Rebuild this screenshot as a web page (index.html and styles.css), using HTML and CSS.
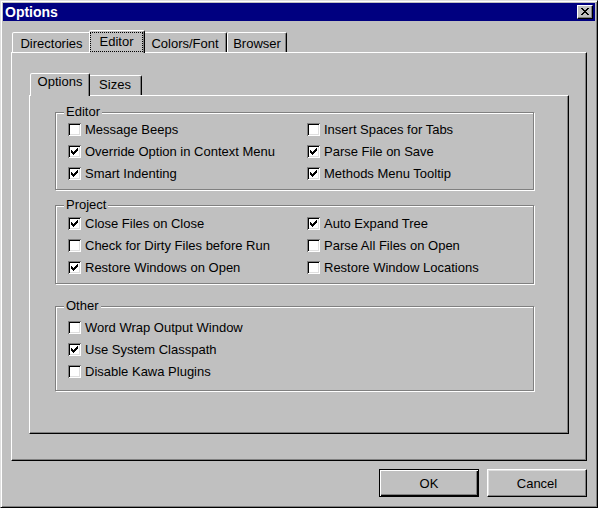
FILE: index.html
```html
<!DOCTYPE html>
<html>
<head>
<meta charset="utf-8">
<title>Options</title>
<link rel="stylesheet" href="styles.css">
</head>
<body>
<div class="window">
  <div class="titlebar">
    <span class="title">Options</span>
    <button class="close" aria-label="Close">
      <svg width="8" height="7" viewBox="0 0 8 7" shape-rendering="crispEdges"><path d="M0 0h2v1h-2zM6 0h2v1h-2zM1 1h2v1h-2zM5 1h2v1h-2zM2 2h4v1h-4zM3 3h2v1h-2zM2 4h4v1h-4zM1 5h2v1h-2zM5 5h2v1h-2zM0 6h2v1h-2zM6 6h2v1h-2z" fill="#000"/></svg>
    </button>
  </div>
  <div class="main">
    <div class="tabs outer-tabs">
      <div class="tab t-dir">Directories</div>
      <div class="tab active t-editor"><span class="focus">Editor</span></div>
      <div class="tab t-colors">Colors/Font</div>
      <div class="tab t-browser">Browser</div>
    </div>
    <div class="panel outer-panel">
      <div class="tabs inner-tabs">
        <div class="tab active t-options">Options</div>
        <div class="tab t-sizes">Sizes</div>
      </div>
      <div class="panel inner-panel">
        <div class="group g-editor">
          <span class="legend">Editor</span>
          <div class="rows">
            <label class="cb"><span class="box"></span>Message Beeps</label>
            <label class="cb"><span class="box"></span>Insert Spaces for Tabs</label>
            <label class="cb"><span class="box checked"><svg width="13" height="13" viewBox="0 0 13 13" shape-rendering="crispEdges"><path d="M9 3h1v1h-1zM8 4h2v1h-2zM3 5h1v1h-1zM7 5h3v1h-3zM3 6h2v1h-2zM6 6h3v1h-3zM3 7h5v1h-5zM4 8h3v1h-3zM5 9h1v1h-1z"/></svg></span>Override Option in Context Menu</label>
            <label class="cb"><span class="box checked"><svg width="13" height="13" viewBox="0 0 13 13" shape-rendering="crispEdges"><path d="M9 3h1v1h-1zM8 4h2v1h-2zM3 5h1v1h-1zM7 5h3v1h-3zM3 6h2v1h-2zM6 6h3v1h-3zM3 7h5v1h-5zM4 8h3v1h-3zM5 9h1v1h-1z"/></svg></span>Parse File on Save</label>
            <label class="cb"><span class="box checked"><svg width="13" height="13" viewBox="0 0 13 13" shape-rendering="crispEdges"><path d="M9 3h1v1h-1zM8 4h2v1h-2zM3 5h1v1h-1zM7 5h3v1h-3zM3 6h2v1h-2zM6 6h3v1h-3zM3 7h5v1h-5zM4 8h3v1h-3zM5 9h1v1h-1z"/></svg></span>Smart Indenting</label>
            <label class="cb"><span class="box checked"><svg width="13" height="13" viewBox="0 0 13 13" shape-rendering="crispEdges"><path d="M9 3h1v1h-1zM8 4h2v1h-2zM3 5h1v1h-1zM7 5h3v1h-3zM3 6h2v1h-2zM6 6h3v1h-3zM3 7h5v1h-5zM4 8h3v1h-3zM5 9h1v1h-1z"/></svg></span>Methods Menu Tooltip</label>
          </div>
        </div>
        <div class="group g-project">
          <span class="legend">Project</span>
          <div class="rows">
            <label class="cb"><span class="box checked"><svg width="13" height="13" viewBox="0 0 13 13" shape-rendering="crispEdges"><path d="M9 3h1v1h-1zM8 4h2v1h-2zM3 5h1v1h-1zM7 5h3v1h-3zM3 6h2v1h-2zM6 6h3v1h-3zM3 7h5v1h-5zM4 8h3v1h-3zM5 9h1v1h-1z"/></svg></span>Close Files on Close</label>
            <label class="cb"><span class="box checked"><svg width="13" height="13" viewBox="0 0 13 13" shape-rendering="crispEdges"><path d="M9 3h1v1h-1zM8 4h2v1h-2zM3 5h1v1h-1zM7 5h3v1h-3zM3 6h2v1h-2zM6 6h3v1h-3zM3 7h5v1h-5zM4 8h3v1h-3zM5 9h1v1h-1z"/></svg></span>Auto Expand Tree</label>
            <label class="cb"><span class="box"></span>Check for Dirty Files before Run</label>
            <label class="cb"><span class="box"></span>Parse All Files on Open</label>
            <label class="cb"><span class="box checked"><svg width="13" height="13" viewBox="0 0 13 13" shape-rendering="crispEdges"><path d="M9 3h1v1h-1zM8 4h2v1h-2zM3 5h1v1h-1zM7 5h3v1h-3zM3 6h2v1h-2zM6 6h3v1h-3zM3 7h5v1h-5zM4 8h3v1h-3zM5 9h1v1h-1z"/></svg></span>Restore Windows on Open</label>
            <label class="cb"><span class="box"></span>Restore Window Locations</label>
          </div>
        </div>
        <div class="group g-other">
          <span class="legend">Other</span>
          <div class="rows single">
            <label class="cb"><span class="box"></span>Word Wrap Output Window</label>
            <label class="cb"><span class="box checked"><svg width="13" height="13" viewBox="0 0 13 13" shape-rendering="crispEdges"><path d="M9 3h1v1h-1zM8 4h2v1h-2zM3 5h1v1h-1zM7 5h3v1h-3zM3 6h2v1h-2zM6 6h3v1h-3zM3 7h5v1h-5zM4 8h3v1h-3zM5 9h1v1h-1z"/></svg></span>Use System Classpath</label>
            <label class="cb"><span class="box"></span>Disable Kawa Plugins</label>
          </div>
        </div>
      </div>
    </div>
    <div class="buttons">
      <button class="btn default">OK</button>
      <button class="btn">Cancel</button>
    </div>
  </div>
</div>
</body>
</html>
```

FILE: styles.css
```css
* { box-sizing: border-box; }
html, body { margin: 0; padding: 0; }
body {
  background: #ffffff;
  font-family: "Liberation Sans", Arial, sans-serif;
  font-size: 13px;
  color: #000;
}
.window {
  width: 598px;
  height: 508px;
  background: #c0c0c0;
  border: 1px solid;
  border-color: #dfdfdf #000 #000 #dfdfdf;
  box-shadow: inset 1px 1px 0 #fff, inset -1px -1px 0 #808080;
  padding: 2px;
  display: flex;
  flex-direction: column;
}
.titlebar {
  height: 18px;
  flex: none;
  background: #000080;
  display: flex;
  align-items: center;
  justify-content: space-between;
  padding: 0 2px 0 2px;
}
.title {
  color: #fff;
  font-weight: bold;
  font-size: 14px;
  line-height: 18px;
}
.close {
  width: 16px;
  height: 14px;
  background: #c0c0c0;
  border: 1px solid;
  border-color: #fff #000 #000 #fff;
  box-shadow: inset -1px -1px 0 #808080;
  padding: 0 0 1px 0;
  display: flex;
  align-items: center;
  justify-content: center;
}
.close svg { display: block; }
.main {
  flex: 1;
  padding: 9px 8px 0 8px;
  display: flex;
  flex-direction: column;
}
.tabs {
  display: flex;
  align-items: flex-end;
  height: 22px;
  position: relative;
  z-index: 1;
  flex: none;
}
.outer-tabs { padding-left: 1px; }
.inner-tabs { padding-left: 3px; }
.tab {
  height: 20px;
  border: 1px solid;
  border-bottom: none;
  border-color: #fff #000 transparent #fff;
  border-radius: 2px 2px 0 0;
  box-shadow: inset -1px 0 0 #808080;
  background: #c0c0c0;
  padding-top: 3px;
  line-height: 15px;
  text-align: center;
  white-space: nowrap;
}
.tab.active {
  height: 23px;
  margin: 0 -2px -1px -2px;
  position: relative;
  z-index: 2;
}
.outer-tabs .tab.active { padding-top: 0; }
.inner-tabs .tab { padding-top: 1px; }
.inner-tabs .tab.active { padding-top: 0; }
.focus {
  display: block;
  margin: 1px 1px 0 0;
  height: 20px;
  border: 1px dotted #000;
  padding-top: 1px;
  line-height: 15px;
}
.t-dir { width: 79px; }
.t-editor { width: 56px; }
.t-colors { width: 84px; }
.t-browser { width: 60px; }
.t-options { width: 60px; }
.t-sizes { width: 54px; }
.panel {
  background: #c0c0c0;
  border: 1px solid;
  border-color: #fff #000 #000 #fff;
  box-shadow: inset -1px -1px 0 #808080;
}
.outer-panel {
  height: 409px;
  flex: none;
  padding: 20px 17px 0 17px;
}
.inner-panel {
  height: 339px;
  padding: 16px 0 0 25px;
}
.group {
  position: relative;
  width: 479px;
  border: 1px solid #808080;
  box-shadow: 1px 1px 0 #fff, inset 1px 1px 0 #fff;
}
.g-editor { padding: 5px 0 5px 0; }
.g-project { margin-top: 15px; padding: 6px 0 5px 0; }
.g-other { margin-top: 22px; padding: 9px 0 8px 0; }
.legend {
  position: absolute;
  top: -9px;
  left: 8px;
  padding: 0 2px;
  background: #c0c0c0;
  line-height: 15px;
}
.rows {
  display: grid;
  grid-template-columns: 239px 1fr;
  grid-auto-rows: 22px;
  padding-left: 12px;
}
.rows.single { grid-template-columns: 1fr; }
.cb {
  display: flex;
  align-items: center;
  gap: 4px;
  white-space: nowrap;
  line-height: 15px;
}
.box {
  width: 13px;
  height: 13px;
  flex: none;
  background: #fff;
  box-shadow: inset 1px 1px 0 #808080, inset -1px -1px 0 #fff, inset 2px 2px 0 #000, inset -2px -2px 0 #dfdfdf;
}
.box svg { display: block; }
.buttons {
  display: flex;
  justify-content: flex-end;
  gap: 8px;
  margin-top: 8px;
}
.btn {
  width: 100px;
  height: 28px;
  background: #c0c0c0;
  border: 1px solid;
  border-color: #fff #000 #000 #fff;
  box-shadow: inset -1px -1px 0 #808080, inset 1px 1px 0 #dfdfdf;
  font-family: "Liberation Sans", Arial, sans-serif;
  font-size: 13px;
  color: #000;
  padding: 0;
}
.btn.default {
  border-color: #000;
  box-shadow: inset 1px 1px 0 #fff, inset -1px -1px 0 #000, inset -2px -2px 0 #808080;
}
```
